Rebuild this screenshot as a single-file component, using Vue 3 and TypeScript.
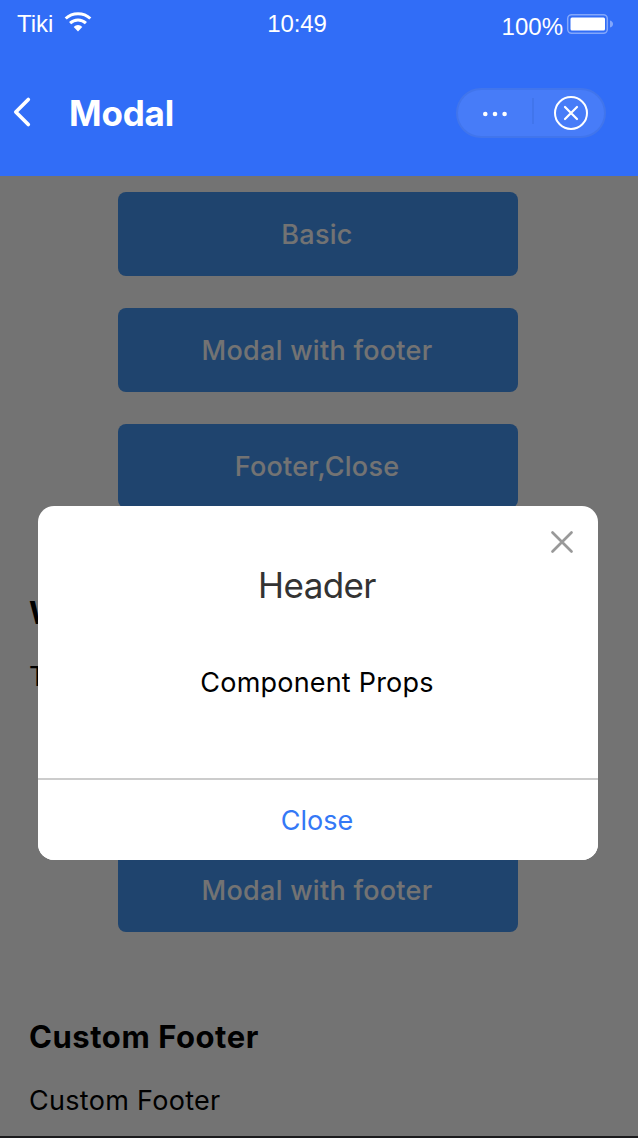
<script setup lang="ts">
import { ref } from 'vue'

const open = ref(true)
const demos: string[] = ['Basic', 'Modal with footer', 'Footer,Close']
</script>

<template>
  <div class="screen">
    <header class="top">
      <div class="status">
        <div class="carrier">
          <span>Tiki</span>
          <svg class="wifi" width="28" height="22" viewBox="0 0 28 22" fill="none" stroke="#fff">
            <path d="M1.700 7.500C8.500 1 19.500 1 26.300 7.500" stroke-width="3" />
            <path d="M6.100 12.200C10.500 8 17.500 8 21.900 12.200" stroke-width="3" />
            <path d="M9.700 16C12 13.300 16 13.300 18.300 16L14 20.500Z" fill="#fff" stroke="none" />
          </svg>
        </div>
        <span class="clock">10:49</span>
        <div class="power">
          <span class="percent">100%</span>
          <svg class="battery" width="48" height="22" viewBox="0 0 48 22">
            <rect x="1.700" y="1.700" width="39.600" height="18.600" rx="4" fill="none" stroke="#83a7fb" stroke-width="1.500" />
            <rect x="4.500" y="4.500" width="34.500" height="13" rx="1.500" fill="#fff" />
            <path d="M44 7.500Q47 8.500 47 11T44 14.500Z" fill="#83a7fb" />
          </svg>
        </div>
      </div>
      <div class="nav">
        <svg class="back" width="20" height="32" viewBox="0 0 20 32">
          <path d="M16.300 3.500L3.800 16L16.300 28.500" fill="none" stroke="#fff" stroke-width="3.700" stroke-linecap="round" stroke-linejoin="round" />
        </svg>
        <h1 class="title">Modal</h1>
        <div class="capsule">
          <svg width="150" height="50" viewBox="0 0 150 50">
            <rect x="1" y="1" width="148" height="48" rx="24" fill="#477cf8" stroke="#4175ec" stroke-width="2" />
            <path d="M77 10V36" stroke="#4175ec" stroke-width="2" />
            <g fill="#fff">
              <circle cx="29.300" cy="26" r="2.300" />
              <circle cx="39" cy="26" r="2.300" />
              <circle cx="48.600" cy="26" r="2.300" />
            </g>
            <circle cx="115" cy="25" r="16" fill="none" stroke="#fff" stroke-width="2" />
            <path d="M109 19L121 31M121 19L109 31" stroke="#fff" stroke-width="2.200" stroke-linecap="round" />
          </svg>
        </div>
      </div>
    </header>

    <main class="page">
      <div class="buttons">
        <button v-for="demo in demos" :key="demo" class="btn" @click="open = true">{{ demo }}</button>
      </div>
      <section class="section">
        <h2>W</h2>
        <p>T</p>
      </section>
      <div class="buttons second">
        <button class="btn" @click="open = true">Modal with footer</button>
      </div>
      <section class="section">
        <h2>Custom Footer</h2>
        <p>Custom Footer</p>
      </section>
      <div v-if="open" class="overlay">
        <div class="modal">
          <svg class="close" width="26" height="26" viewBox="0 0 26 26" @click="open = false">
            <path d="M3.500 3.500L22.500 22.500M22.500 3.500L3.500 22.500" stroke="#999" stroke-width="2.700" stroke-linecap="round" />
          </svg>
          <h3>Header</h3>
          <p class="body">Component Props</p>
          <button class="action" @click="open = false">Close</button>
        </div>
      </div>
    </main>
    <div class="edge"></div>
  </div>
</template>

<style>
body {
  margin: 0;
}
</style>

<style scoped>
.screen {
  width: 638px;
  height: 1138px;
  overflow: hidden;
  display: flex;
  flex-direction: column;
  font-family: Inter, "Liberation Sans", sans-serif;
}
h1, h2, h3, p {
  margin: 0;
}
.top {
  height: 176px;
  flex: none;
  background: #316df7;
  color: #fff;
}
.status {
  height: 48px;
  display: grid;
  grid-template-columns: 250px 94px 1fr;
  font: 24px/48px "Liberation Sans", Arial, sans-serif;
}
.carrier {
  display: flex;
  padding-left: 17px;
}
.wifi {
  margin: 11px 0 0 11px;
}
.clock {
  text-align: center;
  letter-spacing: -0.1px;
}
.power {
  display: flex;
  justify-content: flex-end;
  padding-right: 24px;
}
.percent {
  margin: 3px 3px 0 0;
}
.battery {
  margin-top: 13px;
}
.nav {
  height: 128px;
  display: flex;
  align-items: center;
  box-sizing: border-box;
  padding: 2px 32px 0 12px;
}
.back {
  margin-top: -2px;
}
.title {
  margin-left: 37px;
  font-size: 35px;
  line-height: 48px;
  font-weight: 700;
  letter-spacing: -0.2px;
}
.capsule {
  margin-left: auto;
  height: 50px;
}
.page {
  position: relative;
  flex: 1;
  background: #fff;
  display: flex;
  flex-direction: column;
}
.buttons {
  display: flex;
  flex-direction: column;
  align-items: center;
  gap: 32px;
  padding: 16px 2px 0 0;
}
.btn {
  box-sizing: border-box;
  width: 400px;
  height: 84px;
  padding: 2px 2px 0 0;
  border: 0;
  border-radius: 8px;
  background: #4597f4;
  color: #fff;
  font: 500 27px/82px Inter, sans-serif;
  letter-spacing: 0.27px;
}
.section {
  padding: 80px 29px 0;
  color: #000;
}
.section h2 {
  font-size: 31px;
  line-height: 50px;
  font-weight: 700;
  letter-spacing: 0.55px;
}
.section p {
  margin-top: 20px;
  font-size: 27px;
  line-height: 38px;
  letter-spacing: 0.3px;
}
.second {
  padding-top: 152px;
}
.overlay {
  position: absolute;
  inset: 0;
  background: rgba(0, 0, 0, 0.55);
}
.modal {
  position: relative;
  width: 560px;
  height: 354px;
  margin: 330px 0 0 38px;
  border-radius: 16px;
  background: #fff;
  overflow: hidden;
  display: flex;
  flex-direction: column;
  text-align: center;
}
.close {
  position: absolute;
  top: 23px;
  right: 23px;
}
.modal h3 {
  margin-top: 55px;
  padding-right: 2px;
  font-size: 35px;
  line-height: 48px;
  font-weight: 400;
  letter-spacing: -0.6px;
  color: #333;
}
.body {
  margin-top: 54px;
  padding-right: 2px;
  font-size: 27px;
  line-height: 40px;
  letter-spacing: 0.2px;
  color: #000;
}
.action {
  box-sizing: border-box;
  margin-top: auto;
  height: 82px;
  padding: 2px 2px 0 0;
  border: 0;
  border-top: 2px solid #ccc;
  background: #fff;
  color: #3478f6;
  font: 400 27px/78px Inter, sans-serif;
}
.edge {
  height: 2px;
  flex: none;
  background: #1b1b1d;
}
</style>
